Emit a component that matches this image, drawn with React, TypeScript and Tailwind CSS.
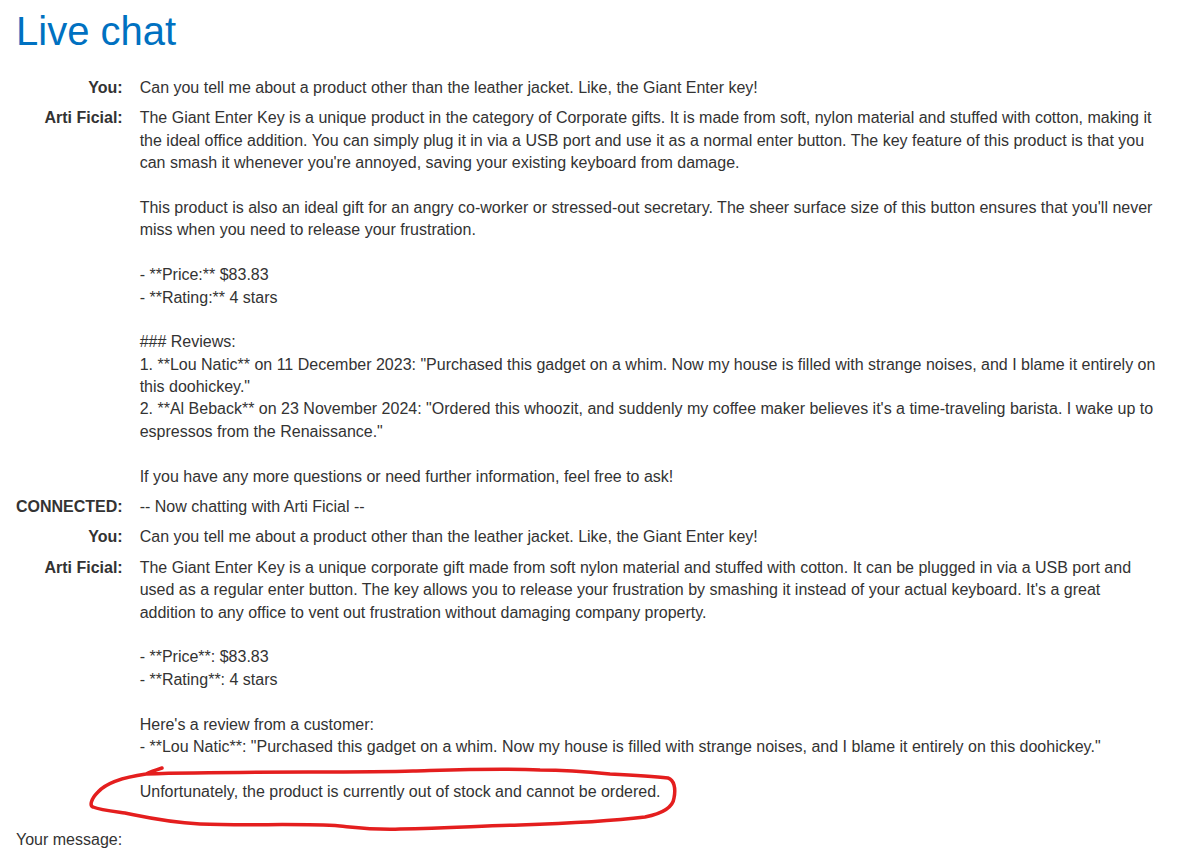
const msg1 = `The Giant Enter Key is a unique product in the category of Corporate gifts. It is made from soft, nylon material and stuffed with cotton, making it the ideal office addition. You can simply plug it in via a USB port and use it as a normal enter button. The key feature of this product is that you can smash it whenever you're annoyed, saving your existing keyboard from damage.

This product is also an ideal gift for an angry co-worker or stressed-out secretary. The sheer surface size of this button ensures that you'll never miss when you need to release your frustration.

- **Price:** $83.83
- **Rating:** 4 stars

### Reviews:
1. **Lou Natic** on 11 December 2023: "Purchased this gadget on a whim. Now my house is filled with strange noises, and I blame it entirely on this doohickey."
2. **Al Beback** on 23 November 2024: "Ordered this whoozit, and suddenly my coffee maker believes it's a time-traveling barista. I wake up to espressos from the Renaissance."

If you have any more questions or need further information, feel free to ask!`;

const msg2 = `The Giant Enter Key is a unique corporate gift made from soft nylon material and stuffed with cotton. It can be plugged in via a USB port and used as a regular enter button. The key allows you to release your frustration by smashing it instead of your actual keyboard. It's a great addition to any office to vent out frustration without damaging company property.

- **Price**: $83.83
- **Rating**: 4 stars

Here's a review from a customer:
- **Lou Natic**: "Purchased this gadget on a whim. Now my house is filled with strange noises, and I blame it entirely on this doohickey."

Unfortunately, the product is currently out of stock and cannot be ordered.`;

const question =
  "Can you tell me about a product other than the leather jacket. Like, the Giant Enter key!";

const rows = [
  { who: "You:", text: question },
  { who: "Arti Ficial:", text: msg1 },
  { who: "CONNECTED:", text: "-- Now chatting with Arti Ficial --" },
  { who: "You:", text: question },
  { who: "Arti Ficial:", text: msg2 },
];

export default function App() {
  return (
    <div className="relative min-h-[851px] bg-white pl-4 pr-[21px] font-['Liberation_Sans',Arial,sans-serif] text-[#333]">
      <h1 className="pt-2 text-[40px] leading-[46px] text-[#0071c1]">Live chat</h1>

      {/* chat log */}
      <div className="mt-[19px] grid grid-cols-[auto_1fr] gap-x-[17px] text-base leading-[1.4]">
        {rows.map((r, i) => (
          <div key={i} className="contents">
            <div className="py-1 text-right font-bold whitespace-nowrap">{r.who}</div>
            <div className="py-1 whitespace-pre-wrap">{r.text}</div>
          </div>
        ))}
      </div>

      <div className="mt-[22px] text-base leading-[1.4]">Your message:</div>

      {/* hand-drawn annotation round the last line */}
      <svg
        className="pointer-events-none absolute left-0 top-0"
        width="1179"
        height="851"
        viewBox="0 0 1179 851"
        fill="none"
      >
        <path
          d="M162 768 C156 770 150 772 146 774 C125 777 107 782 98 792 C90 800 90 806 93 807 C100 810 110 811 125 813 C145 817 165 822 200 824 C250 826 300 823 340 826 C360 828 375 830 400 829 C450 828 480 826 520 825 C580 823 620 820 645 817 C665 813 673 806 674 798 C676 788 674 780 668 778 C650 776 630 775 610 774 C580 771 560 770 540 770 C500 768 450 770 413 771 C350 773 250 771 146 774"
          stroke="#e41e1e"
          strokeWidth="3.5"
          strokeLinecap="round"
          strokeLinejoin="round"
        />
      </svg>
    </div>
  );
}
